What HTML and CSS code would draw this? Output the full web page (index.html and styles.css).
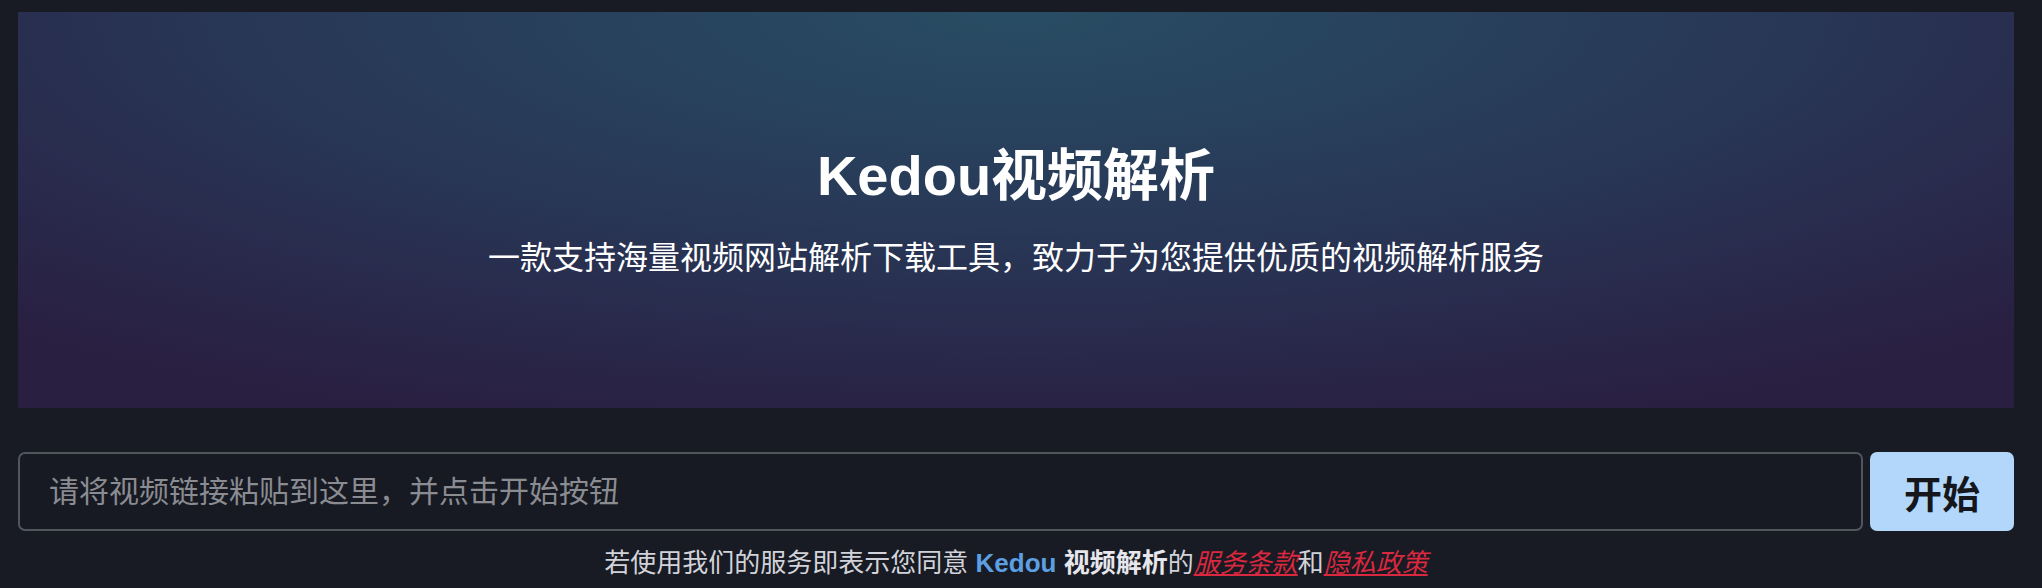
FILE: index.html
```html
<!DOCTYPE html>
<html lang="zh-CN">
<head>
    <meta charset="UTF-8">
    <meta name="viewport" content="width=device-width, initial-scale=1.0">
    <title>Kedou视频解析</title>
    <link rel="stylesheet" href="styles.css">
</head>
<body>
    <div class="page">
        <section class="hero">
            <h1 class="hero-title">Kedou视频解析</h1>
            <p class="hero-sub">一款支持海量视频网站解析下载工具，致力于为您提供优质的视频解析服务</p>
        </section>

        <form class="parse-form" id="parseForm">
            <input type="text" class="url-input" id="url" name="url" placeholder="请将视频链接粘贴到这里，并点击开始按钮">
            <button type="submit" class="start-btn">开始</button>
        </form>

        <p class="terms">若使用我们的服务即表示您同意 <span class="brand">Kedou</span> <b>视频解析</b>的<a href="#" class="terms-link">服务条款</a>和<a href="#" class="terms-link">隐私政策</a></p>
    </div>
</body>
</html>
```

FILE: styles.css
```css
body { margin: 0; background: #181b23; font-family: "Liberation Sans", "Noto Sans CJK SC", sans-serif; color: #fff; }
.page { padding: 12px 28px 0 18px; }

.hero { height: 396px; box-sizing: border-box; padding-top: 130px; text-align: center;
    background: radial-gradient(ellipse 75% 110% at 50% 0%, #284d63 0%, #283a58 45%, #29284a 80%, #291f41 100%); }
.hero-title { margin: 0; font-size: 56px; line-height: 68px; font-weight: bold; }
.hero-sub { margin: 28px 0 0; font-size: 32px; line-height: 40px; }

.parse-form { display: flex; gap: 7px; margin-top: 44px; height: 79px; }
.url-input { flex: 1; box-sizing: border-box; height: 79px; padding: 0 29px; background: #171a22; border: 2px solid #51555c; border-radius: 7px; color: #ddd; font-family: inherit; font-size: 30px; outline: none; }
.url-input::placeholder { color: #8a8c92; }
.start-btn { width: 144px; height: 79px; border: none; border-radius: 7px; background: #b2d7fb; color: #15171c; font-family: inherit; font-size: 38px; font-weight: bold; cursor: pointer; }

.terms { margin: 14px 0 0; text-align: center; font-size: 26px; line-height: 36px; color: #d2d3da; }
.brand { color: #5c9fe2; font-weight: bold; }
.terms b { color: #e6e6ec; }
.terms-link { color: #d9283f; font-style: italic; text-decoration: underline; }
```
